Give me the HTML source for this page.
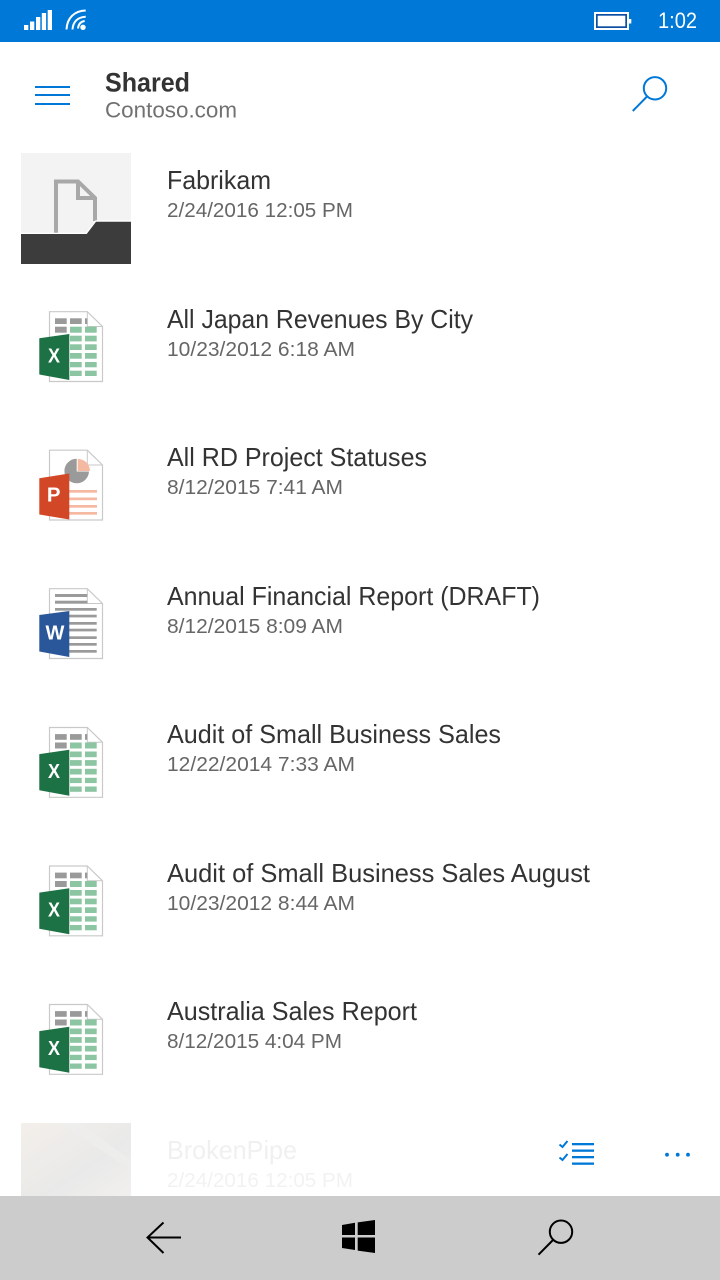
<!DOCTYPE html>
<html lang="en">
<head>
<meta charset="utf-8">
<title>Shared</title>
<style>
html,body{margin:0;padding:0;background:#fff;width:720px;height:1280px;overflow:hidden}
svg{display:block}
text{font-family:"Liberation Sans",sans-serif}
.t{font-size:26px;fill:#333}
.d{font-size:20px;fill:#666}
.l{font-weight:bold;fill:#fff;text-anchor:middle}
</style>
</head>
<body>
<svg width="720" height="1280" viewBox="0 0 720 1280" xmlns="http://www.w3.org/2000/svg">
<defs>
<filter id="b" x="-5%" y="-5%" width="110%" height="110%"><feGaussianBlur stdDeviation="0.35"/></filter>
<linearGradient id="pipe" x1="0" y1="0" x2="1" y2="1">
<stop offset="0" stop-color="#f3efeb"/><stop offset=".45" stop-color="#ecebe9"/><stop offset=".6" stop-color="#e9e9e9"/><stop offset="1" stop-color="#f1f0ee"/>
</linearGradient>
<g id="doc">
<path d="M19.5 11.7H57.3L72.5 26.5V81.5H19.5Z" fill="#fff" stroke="#c9c9c9" stroke-width="1.2"/>
<path d="M57.3 11.7V26.5H72.5" fill="none" stroke="#c9c9c9" stroke-width="1"/>
</g>
<g id="xl">
<use href="#doc"/>
<g fill="#9a9a9a"><rect x="25" y="18.3" width="11.7" height="5.7"/><rect x="40" y="18.3" width="11.7" height="5.7"/><rect x="55" y="18.3" width="2.3" height="5.7"/><rect x="25" y="26.7" width="11.7" height="6"/></g>
<g fill="#8cc5a2">
<rect x="40" y="26.7" width="11.7" height="6"/><rect x="55" y="26.7" width="11.7" height="6"/>
<rect x="40" y="35.7" width="11.7" height="5.7"/><rect x="55" y="35.7" width="11.7" height="5.7"/>
<rect x="40" y="44.3" width="11.7" height="5.7"/><rect x="55" y="44.3" width="11.7" height="5.7"/>
<rect x="40" y="53" width="11.7" height="5.7"/><rect x="55" y="53" width="11.7" height="5.7"/>
<rect x="40" y="62" width="11.7" height="5.3"/><rect x="55" y="62" width="11.7" height="5.3"/>
<rect x="40" y="70.7" width="11.7" height="5.3"/><rect x="55" y="70.7" width="11.7" height="5.3"/>
</g>
<path d="M9.3 38.3L39.3 34V80L9.3 74.5Z" fill="#1e7145"/>
</g>
<g id="pp">
<use href="#doc" y="-1.5"/>
<path d="M46.7 18.7A12.3 12.3 0 1 0 59 31.5H46.7Z" fill="#9a9a9a"/>
<path d="M47.7 19H48A12 12 0 0 1 60 31H47.7Z" fill="#f5b9a2"/>
<g fill="#f5b9a2"><rect x="39" y="50" width="28" height="2.7"/><rect x="39" y="57.5" width="28" height="2.7"/><rect x="39" y="65" width="28" height="2.7"/><rect x="39" y="72" width="28" height="2.7"/></g>
<path d="M9.3 38.3L39.3 33.5V79.5L9.3 74.5Z" fill="#d24726"/>
</g>
<g id="wd">
<use href="#doc" y="-1"/>
<g fill="#9a9a9a">
<rect x="25" y="16" width="32.3" height="3"/><rect x="25" y="22.7" width="32.3" height="3"/>
<rect x="25" y="30" width="41.7" height="2.7"/><rect x="25" y="36.7" width="41.7" height="2.7"/><rect x="25" y="44" width="41.7" height="2.7"/><rect x="25" y="50.7" width="41.7" height="2.7"/><rect x="25" y="58.3" width="41.7" height="2.7"/><rect x="25" y="65" width="41.7" height="2.7"/><rect x="25" y="72" width="41.7" height="2.7"/>
</g>
<path d="M9.3 37L39.3 33V79L9.3 73.5Z" fill="#2b579a"/>
</g>
</defs>

<rect width="720" height="1280" fill="#fff"/>

<!-- status bar -->
<rect width="720" height="42" fill="#0078d7"/>
<g fill="#fff">
<rect x="24" y="25" width="4.3" height="5"/><rect x="30" y="21.5" width="4.3" height="8.5"/><rect x="36" y="17" width="4.3" height="13"/><rect x="41.8" y="13" width="4.3" height="17"/><rect x="47.7" y="10" width="4.3" height="20"/>
<circle cx="83" cy="27.3" r="2.7"/>
</g>
<g fill="none" stroke="#fff" stroke-width="2">
<path d="M66.5 29.5C67 18 74.5 10.7 85.7 10.5"/>
<path d="M72.5 29.5C73 21.5 78 17 85.7 16.7"/>
<path d="M78 28.5C78.5 24 81 21.5 84.7 21"/>
</g>
<rect x="594" y="12" width="35" height="18" fill="#fff"/>
<rect x="596" y="14" width="31" height="14" fill="#0b4ea2"/>
<rect x="597.7" y="15.7" width="27.6" height="10.6" fill="#fff"/>
<rect x="629" y="19" width="2.3" height="4.5" fill="#fff"/>
<text x="658" y="28" font-size="22" fill="#fff" textLength="39" lengthAdjust="spacingAndGlyphs">1:02</text>

<!-- header -->
<g fill="#0078d7"><rect x="35" y="86" width="35" height="2"/><rect x="35" y="94" width="35" height="2"/><rect x="35" y="103" width="35" height="2"/></g>
<text x="105" y="91.7" font-size="26.5" font-weight="bold" fill="#333" textLength="85" lengthAdjust="spacingAndGlyphs">Shared</text>
<text x="105" y="117.5" font-size="22.5" fill="#717171" textLength="132" lengthAdjust="spacingAndGlyphs">Contoso.com</text>
<circle cx="655" cy="88.3" r="11.2" fill="none" stroke="#0078d7" stroke-width="2"/>
<path d="M647 96.5L632.8 111" fill="none" stroke="#0078d7" stroke-width="2"/>

<!-- folder -->
<rect x="21" y="153" width="110" height="111" fill="#f3f3f3"/>
<path d="M56 233V181.5H78L95 198V221" fill="none" stroke="#a8a8a8" stroke-width="4"/>
<path d="M78 181.5V198H95" fill="none" stroke="#a8a8a8" stroke-width="4"/>
<path d="M21 233.5H86.5L96 221H131" fill="none" stroke="#fff" stroke-width="1.5"/>
<path d="M21 234H86.7L96 221.7H131V264H21Z" fill="#3c3c3c"/>
<text class="t" x="167" y="189" textLength="104" lengthAdjust="spacingAndGlyphs">Fabrikam</text>
<text class="d" x="167" y="217" textLength="186" lengthAdjust="spacingAndGlyphs">2/24/2016 12:05 PM</text>

<!-- rows -->
<g filter="url(#b)"><use href="#xl" x="30" y="300"/></g>
<text class="l" x="54" y="362.3" font-size="20.4" textLength="12" lengthAdjust="spacingAndGlyphs">X</text>
<text class="t" x="167" y="328" textLength="306" lengthAdjust="spacingAndGlyphs">All Japan Revenues By City</text>
<text class="d" x="167" y="356" textLength="188" lengthAdjust="spacingAndGlyphs">10/23/2012 6:18 AM</text>

<g filter="url(#b)"><use href="#pp" x="30" y="440"/></g>
<text class="l" x="53.7" y="501.7" font-size="20.4">P</text>
<text class="t" x="167" y="466" textLength="260" lengthAdjust="spacingAndGlyphs">All RD Project Statuses</text>
<text class="d" x="167" y="494" textLength="176" lengthAdjust="spacingAndGlyphs">8/12/2015 7:41 AM</text>

<g filter="url(#b)"><use href="#wd" x="30" y="578"/></g>
<text class="l" x="55" y="639.7" font-size="20">W</text>
<text class="t" x="167" y="605" textLength="373" lengthAdjust="spacingAndGlyphs">Annual Financial Report (DRAFT)</text>
<text class="d" x="167" y="633" textLength="176" lengthAdjust="spacingAndGlyphs">8/12/2015 8:09 AM</text>

<g filter="url(#b)"><use href="#xl" x="30" y="715.8"/></g>
<text class="l" x="54" y="778.1" font-size="20.4" textLength="12" lengthAdjust="spacingAndGlyphs">X</text>
<text class="t" x="167" y="743" textLength="334" lengthAdjust="spacingAndGlyphs">Audit of Small Business Sales</text>
<text class="d" x="167" y="771" textLength="188" lengthAdjust="spacingAndGlyphs">12/22/2014 7:33 AM</text>

<g filter="url(#b)"><use href="#xl" x="30" y="854.3"/></g>
<text class="l" x="54" y="916.6" font-size="20.4" textLength="12" lengthAdjust="spacingAndGlyphs">X</text>
<text class="t" x="167" y="882" textLength="423" lengthAdjust="spacingAndGlyphs">Audit of Small Business Sales August</text>
<text class="d" x="167" y="910" textLength="188" lengthAdjust="spacingAndGlyphs">10/23/2012 8:44 AM</text>

<g filter="url(#b)"><use href="#xl" x="30" y="992.8"/></g>
<text class="l" x="54" y="1055.1" font-size="20.4" textLength="12" lengthAdjust="spacingAndGlyphs">X</text>
<text class="t" x="167" y="1020" textLength="250" lengthAdjust="spacingAndGlyphs">Australia Sales Report</text>
<text class="d" x="167" y="1048" textLength="175" lengthAdjust="spacingAndGlyphs">8/12/2015 4:04 PM</text>

<!-- faded row -->
<rect x="21" y="1123" width="110" height="73" fill="url(#pipe)"/>
<path d="M60 1123L131 1170V1160L80 1123Z" fill="#eeeeec" opacity=".7"/>
<text x="167" y="1159" font-size="26" fill="#f0f0f0" textLength="130" lengthAdjust="spacingAndGlyphs">BrokenPipe</text>
<text x="167" y="1187" font-size="20" fill="#f2f2f2" textLength="186" lengthAdjust="spacingAndGlyphs">2/24/2016 12:05 PM</text>

<!-- action icons -->
<g fill="#0078d7"><rect x="572" y="1143" width="22" height="2.3"/><rect x="572" y="1149.5" width="22" height="2.3"/><rect x="572" y="1156" width="22" height="2.3"/><rect x="572" y="1162.5" width="22" height="2.3"/></g>
<path d="M559.5 1144.5L562.5 1147L567.5 1141M559.5 1157.5L562.5 1160L567.5 1154" fill="none" stroke="#0078d7" stroke-width="2"/>
<g fill="#0078d7"><circle cx="667" cy="1154.7" r="1.9"/><circle cx="677.7" cy="1154.7" r="1.9"/><circle cx="688" cy="1154.7" r="1.9"/></g>

<!-- nav bar -->
<rect y="1196" width="720" height="84" fill="#ccc"/>
<path d="M181 1237.5H148M163.5 1222.5L147.5 1237.5L163.5 1253" fill="none" stroke="#000" stroke-width="2"/>
<path d="M342 1225L355 1222.8V1235H342ZM357.7 1222.4L375 1220V1235H357.7ZM342 1237.5H355V1250L342 1248ZM357.7 1237.5H375V1253L357.7 1250.6Z" fill="#000"/>
<circle cx="561" cy="1231.7" r="11.2" fill="none" stroke="#000" stroke-width="2"/>
<path d="M553 1240L538.5 1254.7" fill="none" stroke="#000" stroke-width="2"/>
</svg>
</body>
</html>
